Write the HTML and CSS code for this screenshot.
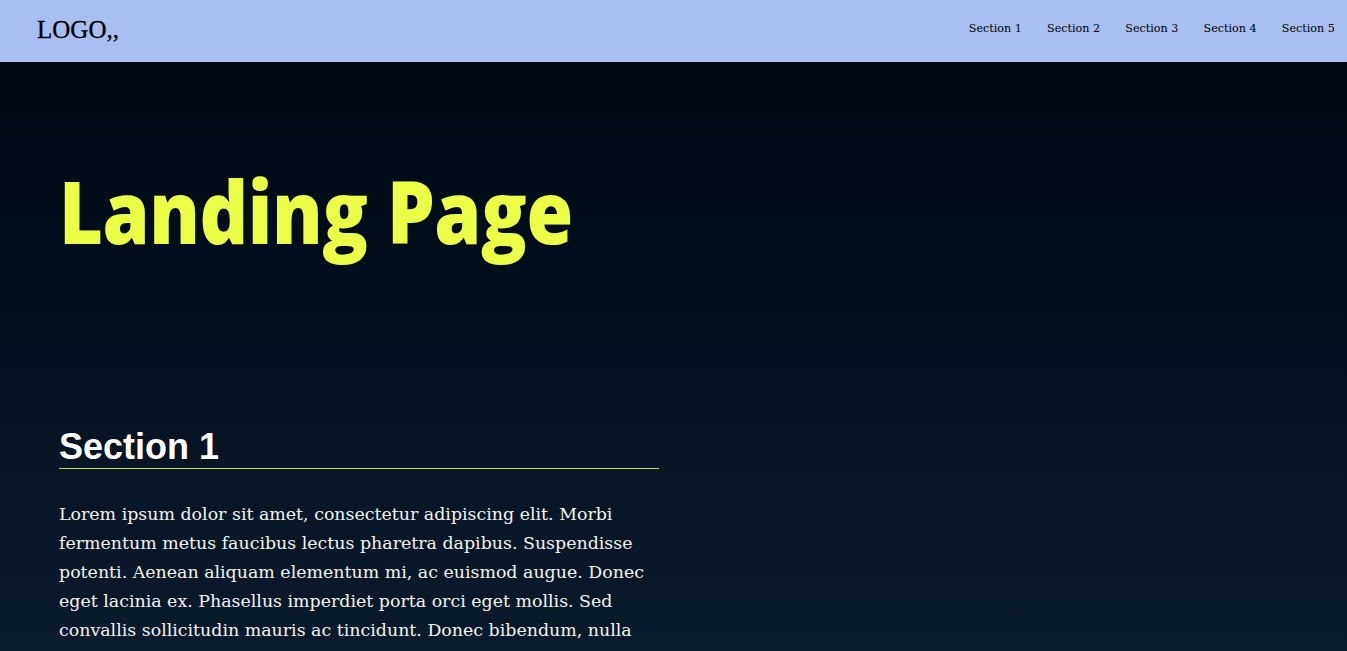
FILE: index.html
```html
<!DOCTYPE html>
<html lang="en">
<head>
<meta charset="utf-8">
<title>Landing Page</title>
<link rel="stylesheet" href="styles.css">
</head>
<body>
<header class="topbar">
  <div class="logo">LOGO,,</div>
  <nav class="nav">
    <a href="#s1">Section 1</a>
    <a href="#s2">Section 2</a>
    <a href="#s3">Section 3</a>
    <a href="#s4">Section 4</a>
    <a href="#s5">Section 5</a>
  </nav>
</header>
<main class="main">
  <h1 class="title">Landing Page</h1>
  <section class="section" id="s1">
    <h2 class="section-title">Section 1</h2>
    <p class="text">Lorem ipsum dolor sit amet, consectetur adipiscing elit. Morbi fermentum metus faucibus lectus pharetra dapibus. Suspendisse potenti. Aenean aliquam elementum mi, ac euismod augue. Donec eget lacinia ex. Phasellus imperdiet porta orci eget mollis. Sed convallis sollicitudin mauris ac tincidunt. Donec bibendum, nulla eget bibendum consectetur, sem nisi aliquam leo, ut pulvinar quam nunc eu augue.</p>
  </section>
</main>
</body>
</html>
```
FILE: styles.css
```css
html, body {
  margin: 0;
  padding: 0;
}
body {
  background: linear-gradient(to bottom, #000510 0%, #0a1b2d 100%);
  background-attachment: fixed;
  min-height: 100vh;
  font-family: "DejaVu Serif", serif;
  color: #fff;
  overflow: hidden;
}
.topbar {
  height: 62px;
  background: #a7c0f0;
  display: flex;
  align-items: center;
  justify-content: space-between;
  padding: 0 12px 0 37px;
}
.logo {
  font-family: "Liberation Serif", serif;
  font-size: 25px;
  color: #000;
  padding-bottom: 3px;
  -webkit-text-stroke: 0.3px #000;
}
.nav {
  display: flex;
  gap: 25px;
  padding-bottom: 5px;
}
.nav a {
  font-family: "DejaVu Serif", serif;
  font-size: 11.2px;
  color: #000;
  text-decoration: none;
}
.main {
  padding: 106px 0 0 59px;
}
.title {
  margin: 0;
  font-family: "Open Sans", sans-serif;
  font-weight: 800;
  font-size: 86px;
  line-height: 1;
  letter-spacing: -0.5px;
  color: #ebff46;
  transform: scaleX(0.88);
  transform-origin: left center;
}
.section {
  width: 600px;
  margin-top: 173px;
}
.section-title {
  margin: 0;
  font-family: "Liberation Sans", sans-serif;
  font-weight: 700;
  font-size: 36px;
  line-height: 40px;
  padding-bottom: 1px;
  border-bottom: 1px solid #c9d66a;
}
.text {
  margin: 31px 0 0;
  font-size: 17.4px;
  line-height: 29px;
  color: #f4f4ee;
}
```
